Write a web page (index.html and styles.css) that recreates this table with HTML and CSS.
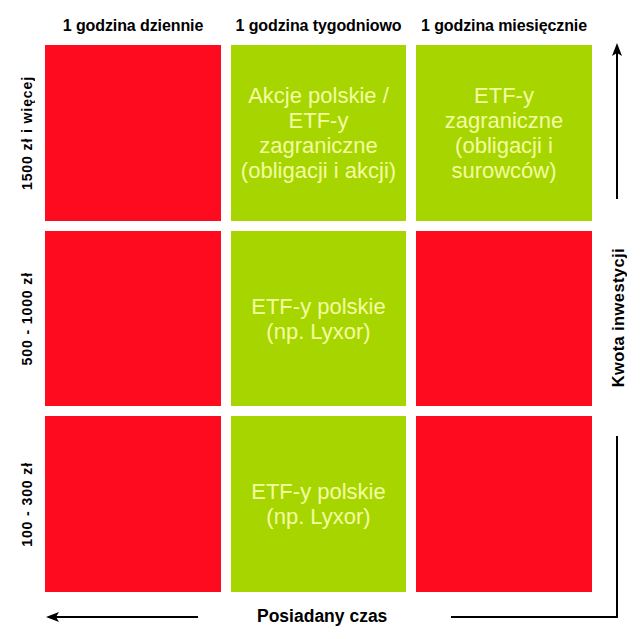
FILE: index.html
```html
<!DOCTYPE html>
<html lang="pl">
<head>
<meta charset="utf-8">
<title>Macierz inwestycji</title>
<link rel="stylesheet" href="styles.css">
</head>
<body>
<div class="page">
  <div class="header">
    <div class="col-label">1 godzina dziennie</div>
    <div class="col-label">1 godzina tygodniowo</div>
    <div class="col-label">1 godzina miesięcznie</div>
  </div>

  <div class="row-labels">
    <div class="row-label"><span>1500 zł i więcej</span></div>
    <div class="row-label"><span>500 - 1000 zł</span></div>
    <div class="row-label"><span>100 - 300 zł</span></div>
  </div>

  <div class="matrix">
    <div class="cell red"></div>
    <div class="cell green">Akcje polskie /<br>ETF-y<br>zagraniczne<br>(obligacji i akcji)</div>
    <div class="cell green">ETF-y<br>zagraniczne<br>(obligacji i<br>surowców)</div>
    <div class="cell red"></div>
    <div class="cell green">ETF-y polskie<br>(np. Lyxor)</div>
    <div class="cell red"></div>
    <div class="cell red"></div>
    <div class="cell green">ETF-y polskie<br>(np. Lyxor)</div>
    <div class="cell red"></div>
  </div>

  <div class="y-axis">
    <svg class="arrow-up" width="12" height="156" viewBox="0 0 12 156">
      <line x1="6" y1="10" x2="6" y2="156" stroke="#000" stroke-width="2"/>
      <polygon points="6,0 1,13 6,10 11,13" fill="#000"/>
    </svg>
    <div class="y-label-box"><span class="y-label">Kwota inwestycji</span></div>
    <div class="y-line"></div>
  </div>

  <div class="footer">
    <svg class="arrow-left" width="152" height="12" viewBox="0 0 152 12">
      <line x1="10" y1="6" x2="152" y2="6" stroke="#000" stroke-width="2"/>
      <polygon points="0,6 13,1 10,6 13,11" fill="#000"/>
    </svg>
    <div class="x-label">Posiadany czas</div>
    <div class="corner"></div>
  </div>
</div>
</body>
</html>
```

FILE: styles.css
```css
html, body {
  margin: 0;
  padding: 0;
  background: #ffffff;
}

.page {
  display: grid;
  grid-template-columns: 45px 547px 50px;
  grid-template-rows: 45px 547px 47px;
  width: 642px;
  height: 639px;
  font-family: "Liberation Sans", Arial, sans-serif;
  color: #000;
}

.header {
  grid-column: 2;
  grid-row: 1;
  display: grid;
  grid-template-columns: 176px 175px 176px;
  column-gap: 10px;
  padding-top: 17px;
}

.col-label {
  text-align: center;
  font-weight: bold;
  font-size: 16px;
  line-height: 18px;
  white-space: nowrap;
  letter-spacing: -0.1px;
}

.row-labels {
  grid-column: 1;
  grid-row: 2;
  display: grid;
  grid-template-rows: 176px 175px 176px;
  row-gap: 10px;
}

.row-label {
  display: flex;
  align-items: center;
  justify-content: center;
  padding-left: 8px;
}

.row-label span {
  writing-mode: vertical-rl;
  transform: rotate(180deg);
  font-weight: bold;
  font-size: 14px;
  letter-spacing: 0.9px;
  white-space: nowrap;
}

.matrix {
  grid-column: 2;
  grid-row: 2;
  display: grid;
  grid-template-columns: 176px 175px 176px;
  grid-template-rows: 176px 175px 176px;
  gap: 10px;
}

.cell {
  display: flex;
  align-items: center;
  justify-content: center;
  text-align: center;
  font-size: 22px;
  line-height: 25px;
  color: #f3fda2;
}

.red {
  background: #fe0b1f;
}

.green {
  background: #a7d500;
}

.y-axis {
  grid-column: 3;
  grid-row: 1 / 3;
  display: flex;
  flex-direction: column;
  align-items: center;
  padding-top: 43px;
}

.arrow-up {
  display: block;
  flex: none;
}

.y-label-box {
  flex: none;
  height: 237px;
  display: flex;
  align-items: center;
  justify-content: center;
}

.y-label {
  writing-mode: vertical-rl;
  transform: rotate(180deg);
  font-weight: bold;
  font-size: 16.5px;
  letter-spacing: 0.4px;
  white-space: nowrap;
  margin-left: 2px;
}

.y-line {
  flex: 1;
  width: 2px;
  background: #000;
}

.footer {
  grid-column: 2 / 4;
  grid-row: 3;
  display: flex;
  align-items: flex-start;
}

.arrow-left {
  display: block;
  flex: none;
  margin-left: 1px;
  margin-top: 19px;
}

.x-label {
  margin-left: 59px;
  margin-top: 13px;
  font-weight: bold;
  font-size: 17.5px;
  line-height: 22px;
  white-space: nowrap;
}

.corner {
  margin-left: auto;
  margin-right: 24px;
  width: 167px;
  height: 26px;
  box-sizing: border-box;
  border-right: 2px solid #000;
  border-bottom: 2px solid #000;
}
```
